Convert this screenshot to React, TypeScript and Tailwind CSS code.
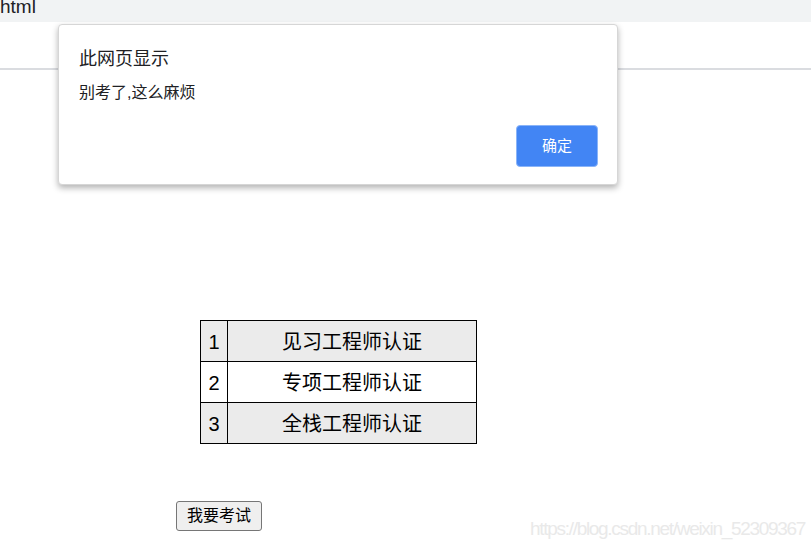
const rows = [
  { no: 1, name: "见习工程师认证", shaded: true },
  { no: 2, name: "专项工程师认证", shaded: false },
  { no: 3, name: "全栈工程师认证", shaded: true },
];

export default function App() {
  return (
    <div
      className="relative w-[811px] h-[548px] overflow-hidden bg-white"
      style={{ fontFamily: '"Liberation Sans", "Noto Sans CJK SC", sans-serif' }}
    >
      {/* browser chrome */}
      <div className="h-[22px] bg-[#f1f3f4] overflow-hidden">
        <div className="text-[19px] leading-[19px] -mt-[3px] text-[#202124]">html</div>
      </div>
      <div className="h-[48px] border-b-2 border-[#dadce0]" />

      {/* page content */}
      <table className="ml-[200px] mt-[250px] w-[277px] border-collapse border border-black text-[20px] text-black">
        <tbody>
          {rows.map((r) => (
            <tr key={r.no} className={`h-[41px] ${r.shaded ? "bg-[#ebebeb]" : "bg-white"}`}>
              <td className="w-[27px] border border-black text-center p-0 pt-[2px]">{r.no}</td>
              <td className="border border-black text-center p-0 pt-[2px]">{r.name}</td>
            </tr>
          ))}
        </tbody>
      </table>

      <button className="ml-[176px] mt-[57px] h-[30px] w-[86px] rounded-[3px] border border-[#767676] bg-[#efefef] text-[16px] text-black">
        我要考试
      </button>

      {/* watermark */}
      <div className="absolute left-[530px] top-[517px] text-[19px] leading-[24px] tracking-[-1.3px] text-[#e9e9e9] whitespace-nowrap">
        https://blog.csdn.net/weixin_52309367
      </div>

      {/* alert dialog */}
      <div className="absolute left-[58px] top-[24px] w-[560px] h-[161px] rounded-[4px] bg-white border border-[#d6d6d6] shadow-[0_3px_6px_rgba(0,0,0,0.3)] flex flex-col px-[20px] pt-[21px] pb-[17px]">
        <div className="text-[18px] leading-[26px] text-[#202124]">此网页显示</div>
        <div className="mt-[10px] text-[16px] leading-[22px] text-[#202124]">别考了,这么麻烦</div>
        <div className="mt-auto flex justify-end">
          <button className="w-[82px] h-[42px] rounded-[4px] bg-[#4285f4] border border-[#8ab4f8] text-white text-[15px] -mr-[1px]">
            确定
          </button>
        </div>
      </div>
    </div>
  );
}
